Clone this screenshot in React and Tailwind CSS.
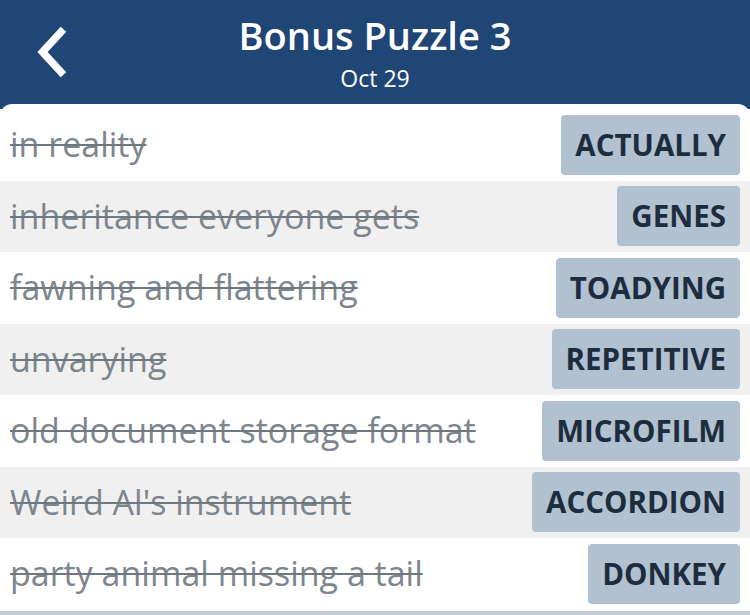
const clues = [
  ['in reality', 'ACTUALLY'],
  ['inheritance everyone gets', 'GENES'],
  ['fawning and flattering', 'TOADYING'],
  ['unvarying', 'REPETITIVE'],
  ['old document storage format', 'MICROFILM'],
  ["Weird Al's instrument", 'ACCORDION'],
  ['party animal missing a tail', 'DONKEY'],
]

export default function App() {
  return (
    <div className="w-[750px] h-[615px] overflow-hidden bg-[#1f4674] font-['Open_Sans',sans-serif]">
      <header className="relative h-[104px] flex flex-col items-center text-white">
        <button type="button" className="absolute left-[30px] top-[24px] w-[46px] h-[56px] flex items-center justify-center">
          <svg viewBox="0 0 40 56" className="w-[38px] h-[54px]">
            <path d="M31 4 L9 28 L31 52" fill="none" stroke="white" strokeWidth="8" />
          </svg>
        </button>
        <h1 className="mt-[9px] text-[38px] leading-[52px] font-semibold">Bonus Puzzle 3</h1>
        <p className="mt-[2px] text-[23px] leading-[30px]">Oct 29</p>
      </header>

      <main className="bg-white rounded-t-[12px] pt-[5px]">
        {clues.map(([clue, answer], idx) => (
          <div
            key={answer}
            className={`h-[71.5px] flex items-center justify-between pl-[10px] pr-[10px] ${idx % 2 ? 'bg-[#f0f0f0]' : 'bg-white'}`}
          >
            <span className="text-[34px] text-[#7d858d] line-through decoration-[2px] decoration-[#6f777f]">{clue}</span>
            <span className="h-[60px] px-[14px] flex items-center rounded-[4px] bg-[#b1c1d0] text-[29.5px] font-bold text-[#1e2d3e]">
              {answer}
            </span>
          </div>
        ))}
        <div className="h-[4px] mt-[1px] bg-[#c2ccd7]" />
      </main>
    </div>
  )
}
